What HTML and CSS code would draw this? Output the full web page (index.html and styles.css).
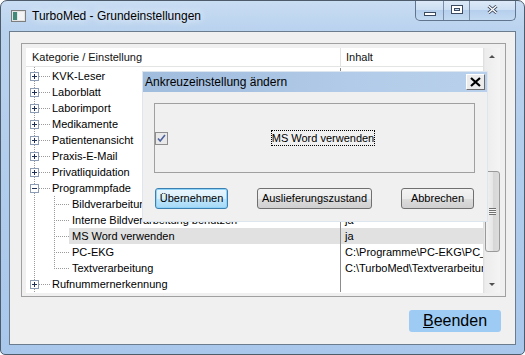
FILE: index.html
```html
<!DOCTYPE html>
<html lang="de">
<head>
    <meta charset="UTF-8">
    <title>TurboMed - Grundeinstellungen</title>
    <link rel="stylesheet" href="styles.css">
</head>
<body>
    <svg width="0" height="0" class="defs">
        <symbol id="plus" viewBox="0 0 9 9">
            <rect x="0.5" y="0.5" width="8" height="8" fill="#fff" stroke="#8b9db5"/>
            <path d="M2 4.5h5M4.5 2v5" stroke="#1f2f56"/>
        </symbol>
        <symbol id="minus" viewBox="0 0 9 9">
            <rect x="0.5" y="0.5" width="8" height="8" fill="#fff" stroke="#8b9db5"/>
            <path d="M2 4.5h5" stroke="#1f2f56"/>
        </symbol>
    </svg>

    <div class="window">
        <div class="titlebar">
            <svg class="app-icon" width="15" height="12" viewBox="0 0 15 12">
                <rect x="0.5" y="0.5" width="14" height="11" fill="#e4e4e4" stroke="#7d7d7d"/>
                <rect x="2" y="2" width="4" height="8" fill="#3f8a78"/>
                <rect x="7" y="2" width="6" height="8" fill="#f4f4f4"/>
            </svg>
            <span class="title">TurboMed - Grundeinstellungen</span>
            <div class="caps">
                <div class="cap cap-min">
                    <svg width="12" height="4" viewBox="0 0 12 4"><rect x="0.5" y="0.5" width="11" height="3" fill="#fff" stroke="#3b4a60"/></svg>
                </div>
                <div class="cap cap-max">
                    <svg width="12" height="9" viewBox="0 0 12 9"><rect x="0.5" y="0.5" width="11" height="8" fill="#fff" stroke="#3b4a60"/><rect x="3.5" y="3.5" width="5" height="2" fill="#c9dcf2" stroke="#3b4a60"/></svg>
                </div>
                <div class="cap cap-close">
                    <svg width="11" height="9" viewBox="0 0 11 9"><path d="M1.5 1l8 7M9.5 1l-8 7" stroke="#3b4a60" stroke-width="3"/><path d="M1.5 1l8 7M9.5 1l-8 7" stroke="#fff" stroke-width="1.4"/></svg>
                </div>
            </div>
        </div>

        <div class="client">
            <div class="panel">
                <div class="list">
                    <div class="grid">
                        <div class="head">
                            <div class="h-tree">Kategorie / Einstellung</div>
                            <div class="h-val">Inhalt</div>
                        </div>
                        <div class="rows">
                            <div class="row"><div class="t"><svg class="box"><use href="#plus"/></svg><i class="hl"></i><span class="lbl">KVK-Leser</span></div><div class="v"></div></div>
                            <div class="row"><div class="t"><svg class="box"><use href="#plus"/></svg><i class="hl"></i><span class="lbl">Laborblatt</span></div><div class="v"></div></div>
                            <div class="row"><div class="t"><svg class="box"><use href="#plus"/></svg><i class="hl"></i><span class="lbl">Laborimport</span></div><div class="v"></div></div>
                            <div class="row"><div class="t"><svg class="box"><use href="#plus"/></svg><i class="hl"></i><span class="lbl">Medikamente</span></div><div class="v"></div></div>
                            <div class="row"><div class="t"><svg class="box"><use href="#plus"/></svg><i class="hl"></i><span class="lbl">Patientenansicht</span></div><div class="v"></div></div>
                            <div class="row"><div class="t"><svg class="box"><use href="#plus"/></svg><i class="hl"></i><span class="lbl">Praxis-E-Mail</span></div><div class="v"></div></div>
                            <div class="row"><div class="t"><svg class="box"><use href="#plus"/></svg><i class="hl"></i><span class="lbl">Privatliquidation</span></div><div class="v"></div></div>
                            <div class="row"><div class="t"><svg class="box"><use href="#minus"/></svg><i class="hl"></i><span class="lbl">Programmpfade</span></div><div class="v"></div></div>
                            <div class="row"><div class="t"><i class="br"></i><span class="lbl sub">Bildverarbeitung</span></div><div class="v"></div></div>
                            <div class="row"><div class="t"><i class="br"></i><span class="lbl sub">Interne Bildverarbeitung benutzen</span></div><div class="v">ja</div></div>
                            <div class="row"><div class="t"><i class="br"></i><span class="lbl sub sel">MS Word verwenden</span></div><div class="v sel">ja</div></div>
                            <div class="row"><div class="t"><i class="br"></i><span class="lbl sub">PC-EKG</span></div><div class="v">C:\Programme\PC-EKG\PC_EKG.exe</div></div>
                            <div class="row"><div class="t"><i class="br last"></i><span class="lbl sub">Textverarbeitung</span></div><div class="v">C:\TurboMed\Textverarbeitung</div></div>
                            <div class="row"><div class="t"><svg class="box"><use href="#plus"/></svg><i class="hl"></i><span class="lbl">Rufnummernerkennung</span></div><div class="v"></div></div>
                        </div>
                    </div>
                    <div class="sb">
                        <div class="sb-btn"><i class="arr up"></i></div>
                        <div class="sb-track">
                            <div class="thumb"><i class="grip"></i></div>
                        </div>
                        <div class="sb-btn"><i class="arr down"></i></div>
                    </div>
                </div>
            </div>

            <div class="footer">
                <div class="btn-big"><u>B</u>eenden</div>
            </div>

            <!-- Dialog über der Liste -->
            <div class="dlg">
                <div class="dlg-title">
                    <span>Ankreuzeinstellung ändern</span>
                    <div class="dlg-x">
                        <svg width="11" height="10" viewBox="0 0 11 10"><path d="M1 1l9 8M10 1l-9 8" stroke="#000" stroke-width="2.2"/></svg>
                    </div>
                </div>
                <div class="dlg-body">
                    <div class="group">
                        <svg class="chk" width="13" height="13" viewBox="0 0 13 13">
                            <rect x="0.5" y="0.5" width="12" height="12" fill="#e9e9e9" stroke="#8e8e8e"/>
                            <path d="M3 6.5l2.2 2.5 4.8-6" fill="none" stroke="#4d62a0" stroke-width="1.6"/>
                        </svg>
                        <div class="chk-label"><span>MS Word verwenden</span></div>
                    </div>
                    <div class="buttons">
                        <div class="btn default w73">Übernehmen</div>
                        <div class="btn w115">Auslieferungszustand</div>
                        <div class="btn w73">Abbrechen</div>
                    </div>
                </div>
            </div>
        </div>
    </div>
</body>
</html>
```

FILE: styles.css
```css
body {
    margin: 0;
    font-family: "Liberation Sans", Arial, sans-serif;
    font-size: 11px;
    color: #000;
    background: #fff;
}
.defs {
    position: absolute;
}
.window {
    width: 525px;
    height: 355px;
    box-sizing: border-box;
    border: 1px solid #4e5b6b;
    border-radius: 7px 7px 5px 5px;
    background: linear-gradient(to bottom, #c9ddf3 0, #b9d2ee 30px, #a8c7eb 100%);
    padding: 0 8px 9px;
    display: flex;
    flex-direction: column;
}

/* Titelleiste */
.titlebar {
    height: 30px;
    display: flex;
    align-items: flex-start;
    flex: none;
}
.app-icon {
    margin: 9px 0 0 2px;
    flex: none;
}
.title {
    margin: 7px 0 0 6px;
    line-height: 16px;
    font-size: 12px;
    text-shadow: 0 0 6px #e6f0fb, 0 0 10px #e6f0fb;
}
.caps {
    margin-left: auto;
    display: flex;
    height: 19px;
    border: 1px solid #62758f;
    border-top: 0;
    border-radius: 0 0 5px 5px;
    overflow: hidden;
    background: linear-gradient(to bottom, #dce9f7 0, #cddff3 45%, #b6cfec 50%, #c4daf2 100%);
}
.cap {
    display: flex;
    align-items: center;
    justify-content: center;
}
.cap-min {
    width: 27px;
    align-items: flex-end;
    padding-bottom: 4px;
    box-sizing: border-box;
}
.cap-max {
    width: 26px;
    border-left: 1px solid #7a8eaa;
    padding-bottom: 3px;
    box-sizing: border-box;
}
.cap-close {
    width: 46px;
    border-left: 1px solid #7a8eaa;
    padding-bottom: 3px;
    box-sizing: border-box;
}

/* Client-Bereich */
.client {
    flex: 1;
    position: relative;
    border: 1px solid #6c7c8f;
    background: #f0f0f0;
    padding: 11px 9px 0 11px;
    display: flex;
    flex-direction: column;
}
.panel {
    border: 1px solid #a0a0a0;
    padding: 4px 5px 3px 4px;
}
.list {
    display: flex;
    height: 245px;
}
.grid {
    flex: 1;
    display: flex;
    flex-direction: column;
    background: #fff;
    overflow: hidden;
}
.head {
    height: 19px;
    box-sizing: border-box;
    border-bottom: 1px solid #e4e4e4;
    display: flex;
    line-height: 18px;
    color: #111;
}
.h-tree {
    width: 314px;
    padding-left: 6px;
    box-sizing: border-box;
}
.h-val {
    flex: 1;
    border-left: 1px solid #e2e2e2;
    padding-left: 5px;
}
.rows {
    flex: 1;
    padding-top: 1px;
    background: repeating-linear-gradient(to bottom, #9a9a9a 0 1px, transparent 1px 2px) 8px 0 / 1px 100% no-repeat, #fff;
}
.row {
    display: flex;
    height: 16px;
    line-height: 16px;
}
.t {
    width: 314px;
    box-sizing: border-box;
    padding-left: 4px;
    display: flex;
    align-items: center;
}
.v {
    flex: 1;
    border-left: 1px solid #8c8c8c;
    padding-left: 4px;
    white-space: nowrap;
    overflow: hidden;
}
.box {
    width: 9px;
    height: 9px;
    flex: none;
}
.hl {
    width: 11px;
    height: 1px;
    flex: none;
    background: repeating-linear-gradient(to right, #9a9a9a 0 1px, transparent 1px 2px);
}
.lbl {
    padding: 0 2px;
    white-space: nowrap;
}
.lbl.sub {
    padding: 0 3px;
}
.br {
    width: 15px;
    height: 16px;
    flex: none;
    margin-left: 24px;
    background:
        repeating-linear-gradient(to bottom, #9a9a9a 0 1px, transparent 1px 2px) 0 0 / 1px 100% no-repeat,
        repeating-linear-gradient(to right, #9a9a9a 0 1px, transparent 1px 2px) 2px 8px / 13px 1px no-repeat;
}
.br.last {
    background:
        repeating-linear-gradient(to bottom, #9a9a9a 0 1px, transparent 1px 2px) 0 0 / 1px 9px no-repeat,
        repeating-linear-gradient(to right, #9a9a9a 0 1px, transparent 1px 2px) 2px 8px / 13px 1px no-repeat;
}
.sel {
    flex: 1;
    background: #e1e1e1;
}

/* Scrollbar */
.sb {
    width: 17px;
    display: flex;
    flex-direction: column;
    background: linear-gradient(to right, #dcdcdc 0, #ececec 2px, #f4f4f4 100%);
}
.sb-btn {
    height: 17px;
    display: flex;
    align-items: center;
    justify-content: center;
}
.arr {
    width: 0;
    height: 0;
    border-left: 3px solid transparent;
    border-right: 3px solid transparent;
}
.arr.up {
    border-bottom: 3px solid #505050;
}
.arr.down {
    border-top: 3px solid #505050;
}
.sb-track {
    flex: 1;
}
.thumb {
    margin: 106px 0 0 2px;
    height: 81px;
    box-sizing: border-box;
    border: 1px solid #9a9a9a;
    border-radius: 3px;
    background: linear-gradient(to right, #f2f2f2 0, #e6e6e6 50%, #d6d6d6 50%, #dcdcdc 100%);
    display: flex;
    align-items: center;
    justify-content: center;
}
.grip {
    width: 7px;
    height: 7px;
    background: repeating-linear-gradient(to bottom, #707070 0 1px, #f6f6f6 1px 2px);
}

/* Fußbereich */
.footer {
    display: flex;
    justify-content: flex-end;
    margin-top: 13px;
    padding-right: 5px;
}
.btn-big {
    width: 92px;
    height: 22px;
    line-height: 22px;
    text-align: center;
    font-size: 16px;
    background: #9dcbf4;
    border-radius: 3px;
}

/* Dialog */
.dlg {
    position: absolute;
    left: 132px;
    top: 39px;
    width: 346px;
    height: 151px;
    box-sizing: border-box;
    border: 1px solid #dde5ee;
    background: #f0f0f0;
    display: flex;
    flex-direction: column;
}
.dlg-title {
    height: 20px;
    display: flex;
    align-items: center;
    padding-left: 2px;
    font-size: 12px;
    background: linear-gradient(to right, #a1bddd 0, #a6c1e1 25%, #b2cbe8 60%, #b8d0eb 100%);
}
.dlg-x {
    margin-left: auto;
    margin-right: 2px;
    width: 19px;
    height: 16px;
    box-sizing: border-box;
    border: 1px solid;
    border-color: #fff #6a6a6a #6a6a6a #fff;
    background: #ececec;
    display: flex;
    align-items: center;
    justify-content: center;
}
.dlg-body {
    padding: 11px 12px 0 11px;
}
.group {
    height: 70px;
    box-sizing: border-box;
    border: 1px solid #a0a0a0;
    display: flex;
    align-items: center;
}
.chk {
    flex: none;
}
.chk-label {
    flex: 1;
    text-align: center;
    padding-left: 4px;
}
.chk-label span {
    outline: 1px dotted #000;
    padding: 1px 0;
}
.buttons {
    display: flex;
    justify-content: space-between;
    margin-top: 15px;
    padding: 0 1px;
}
.btn {
    height: 21px;
    box-sizing: border-box;
    border: 1px solid #707070;
    border-radius: 3px;
    line-height: 19px;
    text-align: center;
    background: linear-gradient(to bottom, #f3f3f3 0, #ebebeb 50%, #dddddd 50%, #d0d0d0 100%);
}
.btn.default {
    border-color: #3c7fb1;
    box-shadow: inset 0 0 0 1px #8fd4f8;
    background: linear-gradient(to bottom, #eaf6fd 0, #d9f0fc 50%, #bee6fd 50%, #a7d9f5 100%);
}
.w73 {
    width: 73px;
}
.w115 {
    width: 115px;
}
```
